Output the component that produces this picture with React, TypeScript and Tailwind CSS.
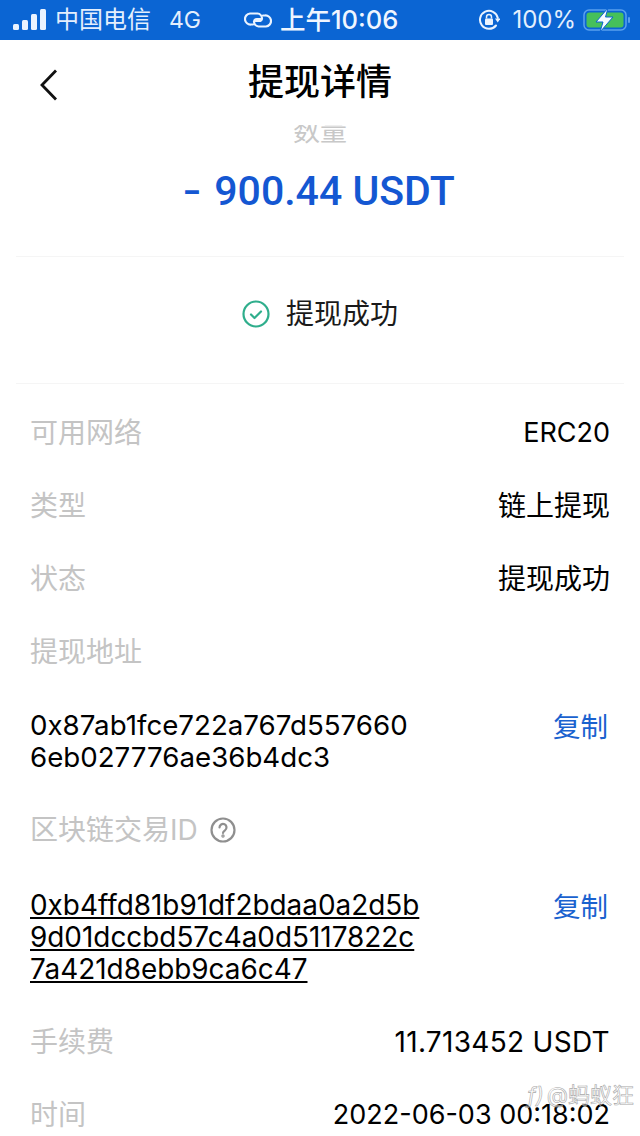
const font = "[font-family:Inter,'Noto_Sans_CJK_SC',sans-serif]";

function Signal() {
  return (
    <svg width="34" height="22" viewBox="0 0 34 22" fill="#eaf3ff">
      <rect x="0" y="15" width="6" height="6" rx="1.5" />
      <rect x="9" y="11" width="6" height="10" rx="1.5" />
      <rect x="18" y="5" width="6" height="16" rx="1.5" />
      <rect x="27" y="0" width="6" height="21" rx="1.5" />
    </svg>
  );
}

function LinkIcon() {
  return (
    <svg width="28" height="18" viewBox="0 0 28 18" fill="none" stroke="#eaf3ff" strokeWidth="2.200" strokeLinecap="round">
      <path d="M9 13.500H7a5.500 5.500 0 0 1-1-11h7.500a5 5 0 0 1 4.500 5 3 3 0 0 1-3 2.500h-3.500" />
      <path d="M19 4.500h2a5.500 5.500 0 0 1 1 11h-7.500a5 5 0 0 1-4.500-5 3 3 0 0 1 3-2.500h3.500" />
    </svg>
  );
}

function LockRotate() {
  return (
    <svg width="22" height="22" viewBox="0 0 22 22" fill="none">
      <path d="M18 16.500A9 9 0 1 1 19.800 9" stroke="#eaf3ff" strokeWidth="2" strokeLinecap="round" />
      <path d="M17 9.500h5.500l-2.800 4z" fill="#eaf3ff" />
      <rect x="7" y="9.500" width="8" height="6.500" rx="1" fill="#eaf3ff" />
      <path d="M8.500 9.500V8a2.500 2.500 0 0 1 5 0v1.500" stroke="#eaf3ff" strokeWidth="1.500" />
    </svg>
  );
}

function Battery() {
  return (
    <svg width="48" height="26" viewBox="0 0 48 26" fill="none">
      <rect x="1" y="3" width="42" height="20" rx="5" stroke="#5aa0ee" strokeWidth="1.500" />
      <rect x="3.500" y="5.500" width="37" height="15" rx="3" fill="#46c05a" />
      <rect x="45" y="10" width="2" height="6" rx="1" fill="#5aa0ee" />
      <path d="M25 1 13 15h7l-3 10 13-15h-7.500z" fill="#f4fbff" stroke="#0b65d3" strokeWidth="1" />
    </svg>
  );
}

function StatusBar() {
  return (
    <div className="flex h-10 items-center justify-between bg-[#0b65d3] pl-[13px] pr-[9px] text-[#e4effd]">
      <div className="flex items-center">
        <Signal />
        <span className="ml-[8px] text-[24px] leading-none">中国电信</span>
        <span className="ml-[18px] text-[23px] leading-none">4G</span>
        <span className="ml-[43px]"><LinkIcon /></span>
        <span className="ml-[8px] text-[25.500px] font-medium leading-none text-[#f0f6ff]">上午10:06</span>
      </div>
      <div className="flex items-center">
        <LockRotate />
        <span className="ml-[12px] text-[24px] leading-none">100%</span>
        <span className="ml-[7px]"><Battery /></span>
      </div>
    </div>
  );
}

function Row({ label, value, valueClass }: { label: string; value: string; valueClass?: string }) {
  return (
    <div className="mb-[37px] flex h-9 items-center justify-between">
      <span className="text-[28px] leading-9 text-[#c4c4c4]">{label}</span>
      <span className={`leading-9 text-black ${valueClass ?? "text-[28px]"}`}>{value}</span>
    </div>
  );
}

function Copyable({ lines, textClass }: { lines: string[]; textClass: string }) {
  return (
    <div className="flex items-start justify-between">
      <div className={`leading-8 text-black ${textClass}`}>
        {lines.map((l) => (
          <div key={l}>{l}</div>
        ))}
      </div>
      <span className="mr-[2px] pt-[2px] text-[27.500px] leading-8 text-[#1a62cf]">复制</span>
    </div>
  );
}

export default function App() {
  return (
    <div className={`relative h-[1136px] w-[640px] overflow-hidden bg-white ${font}`}>
      <StatusBar />
      <header className="relative flex h-[85px] items-start justify-center pt-[22px]">
        <svg className="absolute left-[40px] top-[29px]" width="18" height="32" viewBox="0 0 18 32" fill="none" stroke="#111" strokeWidth="2.800">
          <path d="M16 1.500 2 16l14 14.500" />
        </svg>
        <h1 className="text-[36px] font-medium leading-10 text-black">提现详情</h1>
      </header>

      <div className="flex h-[19px] items-end justify-center overflow-hidden">
        <span className="text-[27px] leading-[24px] text-[#c8c8c8]">数量</span>
      </div>
      <div className="mt-[22px] text-center font-['Roboto',sans-serif] text-[41px] font-medium leading-[50px] text-[#1457d2]">
        <span className="mr-[5px] inline-block scale-x-[1.3]">-</span> 900.44 USDT
      </div>

      <div className="mx-4 mt-[40px] h-px bg-[#f5f5f5]" />
      <div className="flex h-[126px] items-center justify-center gap-[16px] pb-[12px]">
        <svg width="28" height="28" viewBox="0 0 28 28" fill="none" stroke="#2fae8c" strokeWidth="2.200" strokeLinecap="round" strokeLinejoin="round">
          <circle cx="14" cy="14" r="12.500" />
          <path d="m9 14.500 3.500 3.500L19 11.500" />
        </svg>
        <span className="text-[28px] leading-9 text-[#1a1a1a]">提现成功</span>
      </div>
      <div className="mx-4 h-px bg-[#f5f5f5]" />

      <div className="px-[30px] pt-[31px]">
        <Row label="可用网络" value="ERC20" valueClass="text-[27px]" />
        <Row label="类型" value="链上提现" />
        <Row label="状态" value="提现成功" />
        <Row label="提现地址" value="" />
        <div className="pt-[2px]">
          <Copyable textClass="text-[27.700px]" lines={["0x87ab1fce722a767d557660", "6eb027776ae36b4dc3"]} />
        </div>
        <div className="mb-[37px] mt-[39px] flex h-9 items-center gap-[12px]">
          <span className="text-[28px] leading-9 text-[#c4c4c4]">区块链交易ID</span>
          <svg width="26" height="26" viewBox="0 0 26 26" fill="none" stroke="#8f8f8f" strokeWidth="2.200" strokeLinecap="round">
            <circle cx="13" cy="13" r="11.500" />
            <path d="M9.500 10.500a3.500 3.500 0 1 1 5.500 2.800c-1.300.9-2 1.500-2 2.700" />
            <circle cx="13" cy="19" r=".6" />
          </svg>
        </div>
        <div className="pt-[4px]">
          <Copyable textClass="text-[27.900px] underline" lines={["0xb4ffd81b91df2bdaa0a2d5b", "9d01dccbd57c4a0d5117822c", "7a421d8ebb9ca6c47"]} />
        </div>
        <div className="mt-[39px]">
          <Row label="手续费" value="11.713452 USDT" valueClass="text-[28px] tracking-[0.3px]" />
          <Row label="时间" value="2022-06-03 00:18:02" valueClass="text-[27px]" />
        </div>
      </div>

      <div className="absolute bottom-[30px] right-[6px] flex items-center text-[22px] leading-none text-white/40 [-webkit-text-stroke:0.6px_#a8a8a8]">
        <span className="mr-[3px] italic">f)</span>
        <span>@蚂蚁狂</span>
      </div>
    </div>
  );
}
